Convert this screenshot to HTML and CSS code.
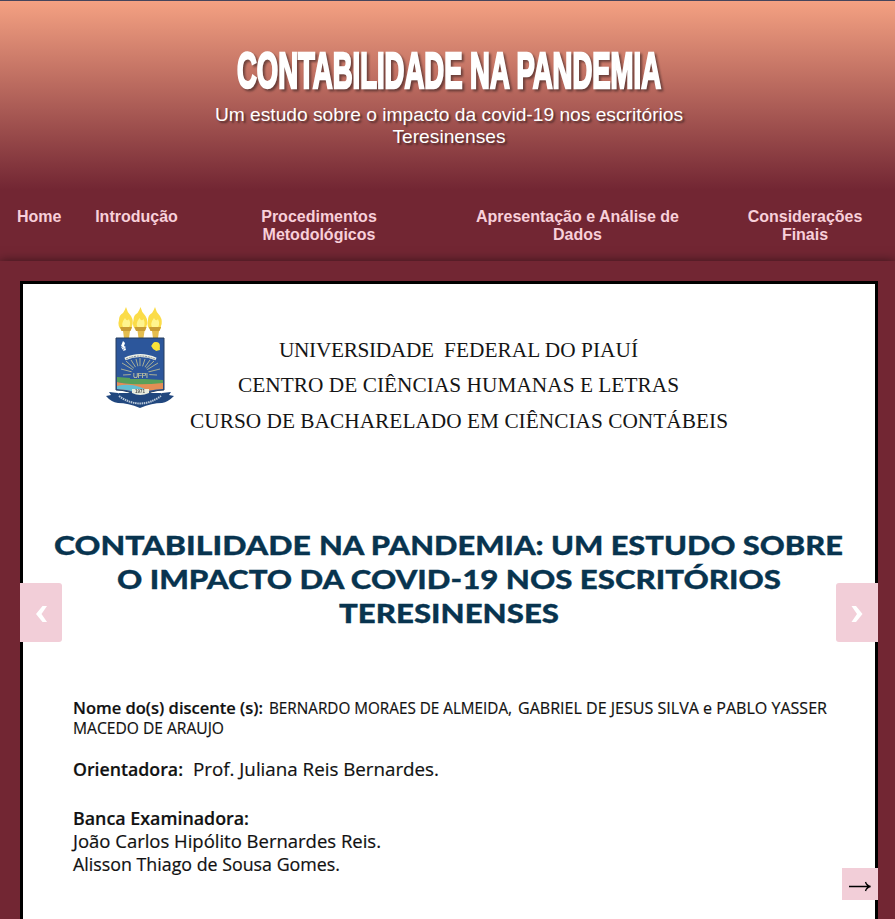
FILE: index.html
```html
<!DOCTYPE html>
<html lang="pt-BR">
<head>
<meta charset="utf-8">
<title>Contabilidade na Pandemia</title>
<link rel="stylesheet" href="styles.css">
</head>
<body>
<header class="header">
  <h1 class="title">
    <svg width="440" height="60" viewBox="228 43 440 60"><text class="title-text" x="237" y="88" textLength="424" lengthAdjust="spacingAndGlyphs">CONTABILIDADE NA PANDEMIA</text></svg>
  </h1>
  <p class="subtitle">Um estudo sobre o impacto da covid-19 nos escritórios Teresinenses</p>
</header>
<nav class="nav">
  <a>Home</a>
  <a>Introdução</a>
  <a>Procedimentos Metodológicos</a>
  <a>Apresentação e Análise de Dados</a>
  <a>Considerações Finais</a>
</nav>
<main class="main">
  <section class="slide">
    <svg class="slide-page" width="852" height="635" viewBox="23 284 852 635">
      <g class="crest">
        <g id="torches">
          <g id="torch">
            <path d="M122 331Q117 326 119 320Q119 315 123 313Q125 310 126 307Q127 312 131 316Q134 321 132 326Q132 330 129 331Z" fill="#fbdc48"/>
            <path d="M124 329Q120 324 125 318Q127 322 129 319Q132 325 127 330Z" fill="#fff48e"/>
            <path d="M120 327h12l-1.500 4h-9z" fill="#c99c34"/>
            <path d="M123 331h7l-1 7h-5z" fill="#e4bd4e"/>
          </g>
          <use href="#torch" x="14.500"/>
          <use href="#torch" x="29"/>
        </g>
        <path d="M116 338h48v52q-12 0-24 7q-12-7-24-7z" fill="#2c569b" stroke="#263c5d" stroke-width="1"/>
        <path d="M117 377q24 2 46 3v4q-23 4-46-2z" fill="#58a05a"/>
        <path d="M117 382q17 4 46 1v6q-14 0-23 6q-9-6-23-6z" fill="#e38e55"/>
        <path d="M117 386q12-3 23 1l10 4q-5 0-10 4q-9-6-23-6z" fill="#62bed2"/>
        <path d="M140 374L123 375M140 374L121 369M140 374L122 363M140 374L126 361M140 374L131 360M140 374L136 359M140 374L140 358M140 374L145 359M140 374L150 360M140 374L154 361M140 374L158 363M140 374L160 369M140 374L157 375" stroke="#c9c794" stroke-width=".8"/>
        <path d="M130 379q1-13 10-13t10 13z" fill="#2c569b"/>
        <path d="M125 359q15-7 31 0" fill="none" stroke="#eff2e9" stroke-width="3"/>
        <path d="M126 359q14-6 29 0" fill="none" stroke="#7d8995" stroke-width="1" stroke-dasharray="2 .8"/>
        <text x="133" y="378" class="crest-name" textLength="15">UFPI</text>
        <circle cx="156" cy="346" r="3.900" fill="#fae338"/>
        <path d="M151 346l4-4 4 2 1 6-4 1z" fill="#fae338"/>
        <path d="M123 341l2 2-1 3 2 1-2 1-3-2zM121 347l3 1-1 2zM125 347l1 3-3 1z" fill="#fff"/>
        <path d="M106 396l5-1-2-3 9 1q22 15 44 0l9-1-2 3 5 1q-6 6-12 7-10 0-22 5-12-5-22-5-7-1-12-7z" fill="#21477e"/>
        <path d="M119 393h42v7q-10 0-21 6-11-6-21-6z" fill="#21477e"/>
        <path d="M119 396q21 15 42 0" fill="none" stroke="#b9c8d9" stroke-width="2" stroke-dasharray="1.500 .7"/>
        <path d="M132 389h17v4q-9 4-17 0z" fill="#e8ecdf"/>
        <text x="135" y="393" class="crest-year">1971</text>
      </g>
      <g class="institution">
        <text x="279" y="357" textLength="155">UNIVERSIDADE</text><text x="444" y="357" textLength="194">FEDERAL DO PIAUÍ</text>
        <text x="238" y="392" textLength="441">CENTRO DE CIÊNCIAS HUMANAS E LETRAS</text>
        <text x="190" y="428" textLength="538">CURSO DE BACHARELADO EM CIÊNCIAS CONTÁBEIS</text>
      </g>
      <g class="work-title">
        <text x="54" y="555" textLength="257" lengthAdjust="spacingAndGlyphs">CONTABILIDADE</text><text x="319" y="555" textLength="524" lengthAdjust="spacingAndGlyphs">NA PANDEMIA: UM ESTUDO SOBRE</text>
        <text x="117" y="589" textLength="664" lengthAdjust="spacingAndGlyphs">O IMPACTO DA COVID-19 NOS ESCRITÓRIOS</text>
        <text x="339" y="623" textLength="220" lengthAdjust="spacingAndGlyphs">TERESINENSES</text>
      </g>
      <g class="details">
        <text class="strong small" x="73" y="714" textLength="190" lengthAdjust="spacingAndGlyphs">Nome do(s) discente (s):</text>
        <text class="small" x="269" y="714" textLength="243" lengthAdjust="spacingAndGlyphs">BERNARDO MORAES DE ALMEIDA,</text><text class="small" x="518" y="714" textLength="309" lengthAdjust="spacingAndGlyphs">GABRIEL DE JESUS SILVA e PABLO YASSER</text>
        <text class="small" x="73" y="734" textLength="151" lengthAdjust="spacingAndGlyphs">MACEDO DE ARAUJO</text>
        <text class="strong" x="73" y="776" textLength="110" lengthAdjust="spacingAndGlyphs">Orientadora:</text>
        <text x="193" y="776" textLength="246" lengthAdjust="spacingAndGlyphs">Prof. Juliana Reis Bernardes.</text>
        <text class="strong" x="73" y="825" textLength="176" lengthAdjust="spacingAndGlyphs">Banca Examinadora:</text>
        <text x="73" y="848" textLength="308" lengthAdjust="spacingAndGlyphs">João Carlos Hipólito Bernardes Reis.</text>
        <text x="73" y="870.500" textLength="267" lengthAdjust="spacingAndGlyphs">Alisson Thiago de Sousa Gomes.</text>
      </g>
    </svg>
    <button class="arrow prev" aria-label="Anterior"><svg width="42" height="59"><path d="M22.500 23h4.500l-5.500 8 5.500 8h-4.500l-6.500-8z"/></svg></button>
    <button class="arrow next" aria-label="Próximo"><svg width="42" height="59"><path d="M20 23h-4.500l5.500 8-5.500 8h4.500l6.500-8z"/></svg></button>
    <button class="forward" aria-label="Avançar"><svg width="36" height="32"><path d="M7 18.500h21M23.500 14q1 3.500 5 4.500q-4 1-5 4.500" fill="none" stroke="#000" stroke-width="1.300"/></svg></button>
  </section>
</main>
</body>
</html>
```
FILE: styles.css
```css
* { box-sizing: border-box; }
body {
  margin: 0;
  height: 919px;
  overflow: hidden;
  background: #722633;
  font-family: "Liberation Sans", Arial, sans-serif;
}
.header {
  height: 190px;
  padding-top: 42px;
  border-top: 1px solid #45455c;
  background: linear-gradient(#f4a182, #722633);
  color: #fff;
  text-align: center;
}
.title { margin: 0 0 1px; height: 60px; }
.title svg { display: block; margin: 0 auto; overflow: visible; }
.title-text {
  font: bold 50px "Liberation Sans Narrow", "Liberation Sans", sans-serif;
  fill: #fff;
  stroke: #fff;
  stroke-width: 2.6px;
  filter: drop-shadow(2px 2px 1px rgba(50, 30, 30, .6));
}
.subtitle {
  width: 500px;
  margin: 0 auto;
  padding-left: 3px;
  font-size: 19.2px;
  line-height: 22px;
  text-shadow: 2px 2px 2px rgba(50, 30, 30, .7);
}
.nav {
  display: grid;
  grid-template-columns: 78px 117px 248px 269px 183px;
  height: 71px;
  padding-top: 18px;
  color: #f8d0da;
  font-size: 16px;
  font-weight: bold;
  line-height: 18px;
  text-align: center;
}
.nav a { padding: 0 17px; }
.nav a:nth-child(3) { padding: 0 50px; }
.nav a:last-child { padding: 0 17px 0 20px; }
.main {
  position: relative;
  height: 658px;
  padding: 20px 17px 0 20px;
  background: #722633;
  box-shadow: 0 0 10px rgba(0, 0, 0, .5);
}
.slide {
  position: relative;
  height: 660px;
  border: 3px solid #000;
  background: #fff;
}
.slide-page { display: block; }
.institution { font: 21.3px "Liberation Serif", "Times New Roman", serif; fill: #151515; }
.work-title { font: 900 27px Lato, sans-serif; fill: #08344f; stroke: #08344f; stroke-width: .3px; }
.details { font: 18.500px "Open Sans", sans-serif; fill: #111; stroke: #111; stroke-width: .2px; }
.details .small { font-size: 17px; }
.details .strong { font-weight: 600; }
.crest-name { font: 7px "Liberation Sans", sans-serif; fill: #e9df9e; }
.crest-year { font: bold 4.5px "Liberation Sans", sans-serif; fill: #4d514d; }
.crest { filter: blur(.35px); }
.arrow, .forward {
  position: absolute;
  padding: 0;
  border: 0;
  background: #f2ced8;
}
.arrow { top: 299px; width: 42px; height: 59px; fill: #fff; }
.arrow svg, .forward svg { display: block; }
.prev { left: -3px; border-radius: 0 3px 3px 0; }
.next { right: -3px; border-radius: 3px 0 0 3px; }
.forward { right: -3px; top: 584px; width: 36px; height: 32px; }
```
